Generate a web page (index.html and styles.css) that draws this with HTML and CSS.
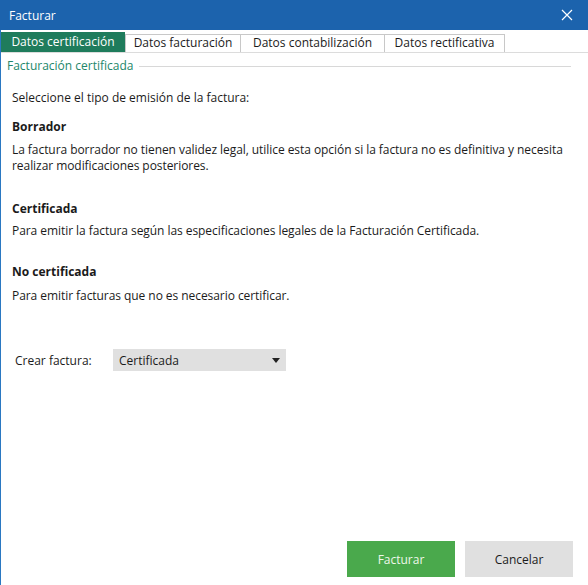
FILE: index.html
```html
<!DOCTYPE html>
<html lang="es">
<head>
    <meta charset="UTF-8">
    <title>Facturar</title>
    <link rel="stylesheet" href="styles.css">
</head>
<body>
<div class="window">
    <header class="titlebar">
        <span class="caption">Facturar</span>
        <span class="close">
            <svg width="12" height="12" viewBox="0 0 12 12"><path d="M1 1L11 11M11 1L1 11" stroke="#fff" stroke-width="1.2"/></svg>
        </span>
    </header>

    <div class="tabs">
        <div class="tab active">Datos certificación</div>
        <div class="tab t2">Datos facturación</div>
        <div class="tab t3">Datos contabilización</div>
        <div class="tab t4">Datos rectificativa</div>
    </div>

    <div class="group">
        <div class="legend">
            <span>Facturación certificada</span>
            <div class="rule"></div>
        </div>

        <p class="intro">Seleccione el tipo de emisión de la factura:</p>

        <h3 class="opt first">Borrador</h3>
        <p class="desc">La factura borrador no tienen validez legal, utilice esta opción si la factura no es definitiva y necesita realizar modificaciones posteriores.</p>

        <h3 class="opt second">Certificada</h3>
        <p class="desc">Para emitir la factura según las especificaciones legales de la Facturación Certificada.</p>

        <h3 class="opt third">No certificada</h3>
        <p class="desc last">Para emitir facturas que no es necesario certificar.</p>

        <div class="field">
            <label>Crear factura:</label>
            <div class="select">
                <span>Certificada</span>
                <svg width="8" height="5" viewBox="0 0 8 5"><path d="M0 0H8L4 5Z" fill="#222"/></svg>
            </div>
        </div>
    </div>

    <div class="actions">
        <button class="btn ok">Facturar</button>
        <button class="btn cancel">Cancelar</button>
    </div>
</div>
</body>
</html>
```

FILE: styles.css
```css
html, body {
    margin: 0;
    padding: 0;
    background: #fff;
}

body {
    font-family: "Open Sans", "Noto Sans", sans-serif;
    font-size: 12px;
    color: #1b1b1b;
}

.window {
    width: 588px;
    height: 585px;
    box-sizing: border-box;
    border-left: 1px solid #2a78c2;
    display: flex;
    flex-direction: column;
}

.titlebar {
    height: 30px;
    margin-left: -1px;
    background: #1c63ad;
    color: #fff;
    display: flex;
    align-items: center;
    justify-content: space-between;
    padding: 0 15px 0 9px;
}

.caption {
    font-size: 12px;
}

.close {
    display: flex;
    align-items: center;
}

.tabs {
    display: flex;
    align-items: flex-end;
    height: 21px;
    border-bottom: 1px solid #dcdcdc;
    margin-top: 1px;
}

.tab {
    box-sizing: border-box;
    height: 18px;
    line-height: 16px;
    text-align: center;
    border: 1px solid #c8c8c8;
    border-left: none;
    border-bottom: none;
    font-size: 12px;
    color: #1b1b1b;
}

.tab.active {
    height: 20px;
    line-height: 19px;
    width: 124px;
    background: #1f7c5c;
    color: #fff;
    border: none;
}

.t2 { width: 116px; border-left: 1px solid #c8c8c8; }
.t3 { width: 144px; }
.t4 { width: 120px; }

.group {
    padding: 0 12px 0 11px;
    flex: 1;
}

.legend {
    display: flex;
    align-items: center;
    margin: 4px 0 0 -5px;
    color: #23876a;
}

.legend .rule {
    flex: 1;
    height: 1px;
    background: #d8d8d8;
    margin: 2px 5px 0 6px;
}

.intro {
    margin: 16px 0 0;
    line-height: 16px;
}

.opt {
    font-size: 12px;
    font-weight: bold;
    margin: 27px 0 0;
    line-height: 16px;
}

.opt.first {
    margin-top: 13px;
}

.opt.third {
    margin-top: 25px;
}

.desc {
    margin: 6px 0 0;
    line-height: 16px;
    letter-spacing: -0.06px;
}

.opt.first + .desc {
    margin-top: 7px;
}

.desc.last {
    margin-top: 8px;
}

.field {
    display: flex;
    align-items: center;
    margin: 45px 0 0 3px;
}

.field label {
    width: 98px;
}

.select {
    width: 173px;
    height: 22px;
    box-sizing: border-box;
    background: #e0e0e0;
    display: flex;
    align-items: center;
    justify-content: space-between;
    padding: 0 6px 0 6px;
}

.actions {
    display: flex;
    justify-content: flex-end;
    gap: 10px;
    padding: 0 15px 8px 0;
}

.btn {
    width: 108px;
    height: 36px;
    border: none;
    font-family: inherit;
    font-size: 12px;
}

.btn.ok {
    background: #4aa94c;
    color: #eef7ea;
}

.btn.cancel {
    background: #e0e0e0;
    color: #1b1b1b;
}
```
